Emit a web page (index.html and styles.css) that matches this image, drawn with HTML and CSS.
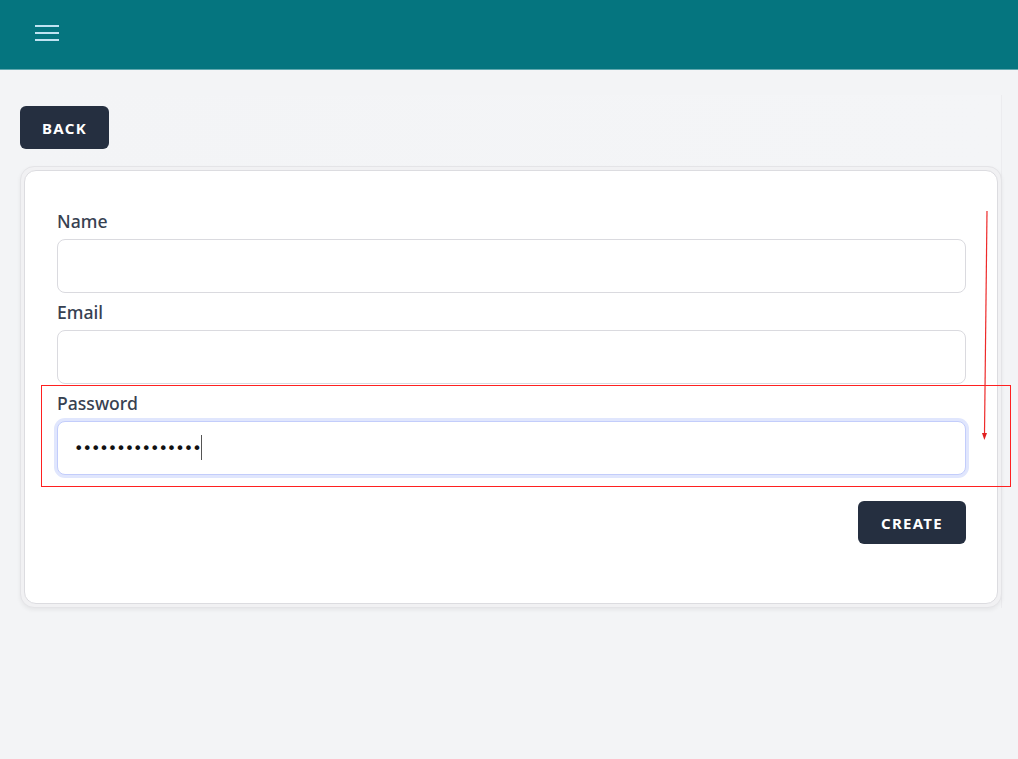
FILE: index.html
```html
<!DOCTYPE html>
<html lang="en">
<head>
<meta charset="utf-8">
<title>Create user</title>
<link rel="stylesheet" href="styles.css">
</head>
<body>
<header class="topbar">
  <button class="menu-btn" aria-label="Menu">
    <svg width="24" height="16" viewBox="0 0 24 16"><path d="M0 1h24M0 8h24M0 15h24" stroke="#bfe3f2" stroke-width="2" fill="none"/></svg>
  </button>
</header>
<main class="page">
  <div class="panel">
    <button class="btn btn-back">BACK</button>
    <div class="card-frame">
      <form class="card">
        <div class="field">
          <label class="label" for="name">Name</label>
          <input class="input" id="name" type="text">
        </div>
        <div class="field">
          <label class="label" for="email">Email</label>
          <input class="input" id="email" type="email">
        </div>
        <div class="field">
          <label class="label" for="password">Password</label>
          <div class="input-wrap">
            <input class="input input-focused" id="password" type="password" value="abcdefghijklmno">
            <span class="caret"></span>
          </div>
        </div>
        <div class="actions">
          <button type="button" class="btn btn-create">CREATE</button>
        </div>
      </form>
    </div>
  </div>
</main>
<svg class="annotation" width="1018" height="759" viewBox="0 0 1018 759">
  <rect x="41.5" y="385.5" width="969" height="101" fill="none" stroke="#ff2020" stroke-width="1"/>
  <path d="M987 211 L984.5 434" stroke="#ee2a2a" stroke-width="1.2" fill="none"/>
  <path d="M982 433 L987 433 L984.4 440 Z" fill="#e02020"/>
</svg>
</body>
</html>
```
FILE: styles.css
```css
* { box-sizing: border-box; }
html, body { margin: 0; padding: 0; }
body {
  background: #f3f4f6;
  font-family: "Noto Sans", "Open Sans", sans-serif;
  color: #374151;
  width: 1018px;
  height: 759px;
  overflow: hidden;
  position: relative;
}
.topbar {
  height: 70px;
  background: #05757f;
  border-bottom: 1px solid #62a9af;
  display: flex;
  align-items: center;
  padding-left: 35px;
}
.menu-btn {
  background: none;
  border: 0;
  padding: 0;
  width: 24px;
  height: 16px;
  display: flex;
  margin-top: -3px;
  cursor: pointer;
}
.page {
  padding: 25px 16px 0 20px;
}
.panel {
  padding-top: 11px;
  background: linear-gradient(to right, #f3f4f6, #f4f5f7);
  border-right: 1px solid #ececef;
}
.btn {
  background: #252f40;
  color: #fff;
  border: 0;
  border-radius: 6px;
  height: 43px;
  font-family: "Noto Sans", sans-serif;
  font-weight: 700;
  font-size: 15px;
  letter-spacing: 1.3px;
  padding: 0;
  cursor: pointer;
}
.btn-back { width: 89px; display: block; }
.btn-create { width: 108px; }
.card-frame {
  margin-top: 17px;
  width: 982px;
  border: 1px solid #e4e4e7;
  border-radius: 14px;
  background: #f1f1f3;
  padding: 3px;
  box-shadow: 0 2px 4px rgba(0,0,0,0.06);
}
.card {
  background: #fff;
  border: 1px solid #dcdce0;
  border-radius: 12px;
  padding: 35px 31px 59px 32px;
  display: flex;
  flex-direction: column;
}
.field {
  display: flex;
  flex-direction: column;
  margin-bottom: 4px;
}
.label {
  font-size: 17.6px;
  line-height: 27px;
  padding-top: 2px;
  font-weight: 500;
  color: #374151;
  margin-bottom: 4px;
}
.input-wrap { position: relative; }
.input {
  width: 909px;
  height: 54px;
  border: 1px solid #dadadf;
  border-radius: 8px;
  background: #fff;
  padding: 0 16px;
  font-size: 16px;
  font-family: "DejaVu Sans", sans-serif;
  color: #111;
  outline: none;
}
.input-focused {
  border-color: #c3cdfb;
  box-shadow: 0 0 0 3px #e0e6fd;
  letter-spacing: -1px;
}
.caret {
  position: absolute;
  left: 144px;
  top: 14px;
  width: 1px;
  height: 25px;
  background: #555;
}
.actions {
  display: flex;
  justify-content: flex-end;
  margin-top: 22px;
}
.annotation {
  position: absolute;
  left: 0;
  top: 0;
  pointer-events: none;
}
```
